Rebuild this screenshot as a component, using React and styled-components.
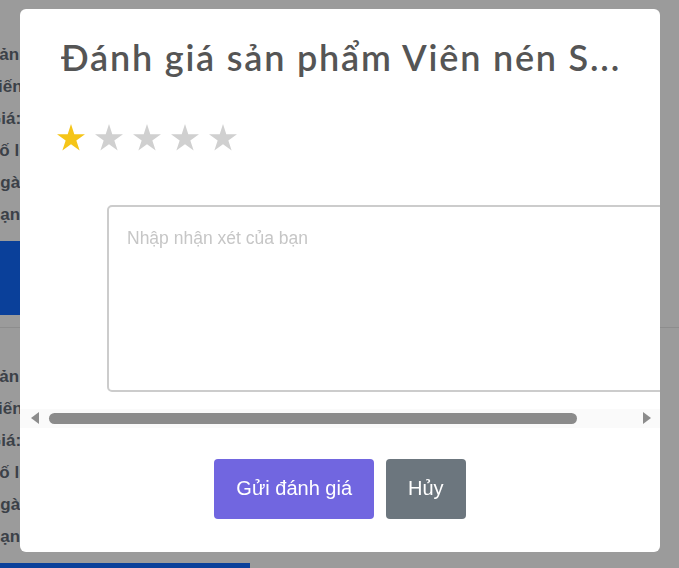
import React, { useState } from "react";
import styled, { createGlobalStyle } from "styled-components";

const GlobalStyle = createGlobalStyle`
  html, body {
    margin: 0;
    padding: 0;
  }
  body {
    width: 679px;
    height: 568px;
    overflow: hidden;
    background: #9b9b9b;
    font-family: "Liberation Sans", Arial, sans-serif;
  }
`;

// page behind the modal (already dimmed by the backdrop)
const Page = styled.div`
  height: 568px;
  overflow: hidden;
  padding-top: 6px;
  box-sizing: border-box;
`;

const PageInner = styled.div`
  margin-left: -12px;
`;

const OrderCard = styled.div`
  padding: 33px 0 12px;
  border-bottom: 1px solid #8d8d8d;
`;

const InfoLine = styled.div`
  height: 32px;
  line-height: 32px;
  font-size: 17px;
  font-weight: 700;
  color: #3b4148;
  white-space: nowrap;
`;

const ReviewButton = styled.div`
  margin-top: 10px;
  width: 262px;
  height: 74px;
  background: #0a409a;
`;

const Modal = styled.div`
  position: fixed;
  left: 20px;
  top: 9px;
  width: 640px;
  height: 543px;
  background: #fff;
  border-radius: 6px;
  display: flex;
  flex-direction: column;
  overflow: hidden;
`;

const Title = styled.h2`
  margin: 26px 30px 0 41px;
  font-family: Lato, "Noto Sans", sans-serif;
  font-weight: 600;
  font-size: 36px;
  line-height: 44px;
  letter-spacing: 1.8px;
  color: #555;
  white-space: nowrap;
  overflow: hidden;
`;

const StarRow = styled.div`
  display: flex;
  gap: 10px;
  margin: 45px 0 0 37px;
`;

const StarButton = styled.button`
  border: 0;
  padding: 0;
  background: none;
  cursor: pointer;
  display: flex;
  svg {
    width: 28px;
    height: 26.6px;
    fill: ${(p) => (p.active ? "#f5c518" : "#d0d0d0")};
  }
`;

const ScrollArea = styled.div`
  margin-top: 54px;
  overflow: hidden;
`;

const ScrollContent = styled.div`
  width: 717px;
  padding-left: 87px;
  box-sizing: border-box;
`;

const CommentBox = styled.textarea`
  display: block;
  width: 630px;
  height: 187px;
  box-sizing: border-box;
  border: 2px solid #cccccc;
  border-radius: 5px;
  padding: 21px 18px;
  font-family: "Liberation Sans", Arial, sans-serif;
  font-size: 17.5px;
  color: #333;
  resize: none;
  outline: none;
  &::placeholder {
    color: #c6c6c6;
  }
`;

const Scrollbar = styled.div`
  margin-top: 17px;
  height: 19px;
  background: #fafafa;
  display: flex;
  align-items: center;
  padding: 0 9px 0 11px;
`;

const Arrow = styled.span`
  width: 0;
  height: 0;
  border-top: 6px solid transparent;
  border-bottom: 6px solid transparent;
  ${(p) =>
    p.dir === "left"
      ? "border-right: 8px solid #8c8c8c;"
      : "border-left: 8px solid #8c8c8c;"}
`;

const Track = styled.div`
  flex: 1;
  margin: 0 10px;
`;

const Thumb = styled.div`
  width: 528px;
  height: 11px;
  border-radius: 6px;
  background: #8b8b8b;
`;

const Actions = styled.div`
  margin-top: 31px;
  display: flex;
  justify-content: center;
  gap: 12px;
`;

const Button = styled.button`
  height: 60px;
  padding: 0 22px;
  border: 0;
  border-radius: 4px;
  font-family: "Liberation Sans", Arial, sans-serif;
  font-size: 20px;
  color: #fff;
  background: ${(p) => (p.secondary ? "#6c767e" : "#7166e0")};
  cursor: pointer;
`;

const Star = () => (
  <svg viewBox="2.45 0 95.1 90.45">
    <polygon points="50,0 61.23,34.55 97.55,34.55 68.17,55.9 79.39,90.45 50,69.1 20.61,90.45 31.83,55.9 2.45,34.55 38.77,34.55" />
  </svg>
);

const truncate = (str, n) => (str.length > n ? str.slice(0, n) + "..." : str);

const orderLines = ["Sản phẩm:", "Tiến độ:", "Giá:", "Số lượng:", "Ngày đặt:", "Hạn giao:"];

const productName = "Viên nén Sủi Berocca Performance";

export default function App() {
  const [rating, setRating] = useState(1);
  const [comment, setComment] = useState("");

  return (
    <>
      <GlobalStyle />
      <Page>
        <PageInner>
          {[0, 1].map((i) => (
            <OrderCard key={i}>
              {orderLines.map((l) => (
                <InfoLine key={l}>{l}</InfoLine>
              ))}
              <ReviewButton />
            </OrderCard>
          ))}
        </PageInner>
      </Page>
      <Modal>
        <Title>Đánh giá sản phẩm {truncate(productName, 10)}</Title>
        <StarRow>
          {[1, 2, 3, 4, 5].map((n) => (
            <StarButton key={n} active={n <= rating} onClick={() => setRating(n)}>
              <Star />
            </StarButton>
          ))}
        </StarRow>
        <ScrollArea>
          <ScrollContent>
            <CommentBox
              placeholder="Nhập nhận xét của bạn"
              value={comment}
              onChange={(e) => setComment(e.target.value)}
            />
          </ScrollContent>
        </ScrollArea>
        <Scrollbar>
          <Arrow dir="left" />
          <Track>
            <Thumb />
          </Track>
          <Arrow dir="right" />
        </Scrollbar>
        <Actions>
          <Button>Gửi đánh giá</Button>
          <Button secondary>Hủy</Button>
        </Actions>
      </Modal>
    </>
  );
}
